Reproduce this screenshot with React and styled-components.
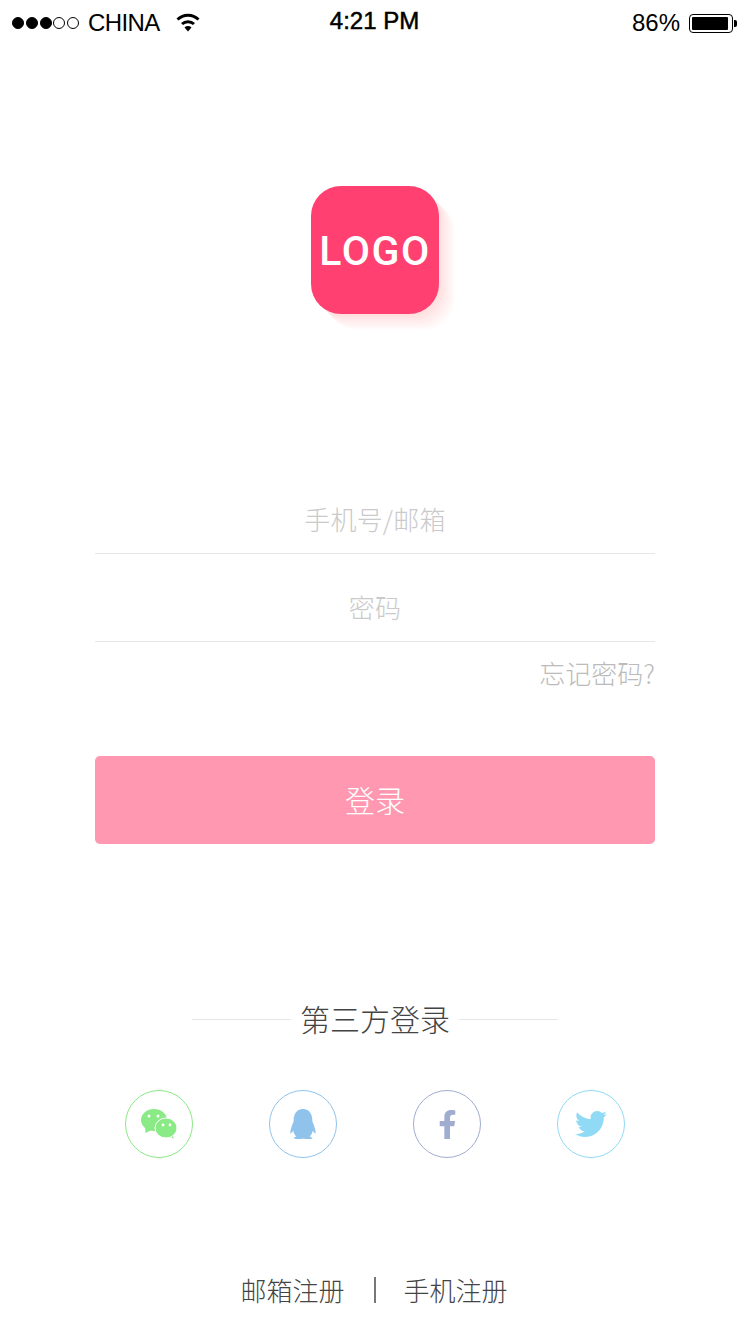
import React from 'react';
import styled, { createGlobalStyle } from 'styled-components';
import { FaFacebookF, FaQq, FaTwitter } from 'react-icons/fa';

const CJK = '"Noto Sans CJK SC", "Liberation Sans", sans-serif';

const GlobalStyle = createGlobalStyle`
  html, body { margin: 0; padding: 0; background: #fff; }
  * { box-sizing: border-box; }
`;

const longShadow = Array.from({ length: 16 }, (_, i) => {
  const d = i + 1;
  return `${d}px ${d}px 0 rgba(255, 64, 112, 0.012)`;
}).join(', ');

const Page = styled.div`
  width: 750px;
  height: 1334px;
  overflow: hidden;
  display: flex;
  flex-direction: column;
  align-items: center;
  font-family: ${CJK};
`;

const StatusBar = styled.div`
  width: 100%;
  height: 44px;
  padding: 2px 17px 0 12px;
  display: grid;
  grid-template-columns: 1fr auto 1fr;
  align-items: center;
  font-family: "Liberation Sans", sans-serif;
  font-size: 24px;
  color: #000;
`;

const StatusLeft = styled.div`
  display: flex;
  align-items: center;
`;

const StatusRight = styled.div`
  display: flex;
  align-items: center;
  justify-content: flex-end;
`;

const Signal = styled.div`
  display: flex;
  gap: 1.75px;
  margin-right: 9px;
`;

const Dot = styled.span`
  width: 12px;
  height: 12px;
  border-radius: 50%;
  border: 1px solid #000;
  background: ${(p) => (p.$on ? '#000' : 'transparent')};
`;

const Carrier = styled.span`
  letter-spacing: -0.6px;
`;

const Clock = styled.div`
  margin-top: -5px;
  padding-left: 4px;
  -webkit-text-stroke: 0.5px #000;
`;

const WifiGlyph = styled.svg`
  width: 24px;
  height: 20px;
  margin-left: 16px;
  margin-top: -3px;
`;

const Battery = styled.div`
  position: relative;
  width: 44px;
  height: 19px;
  margin-left: 9px;
  padding: 2px;
  border: 1px solid #000;
  border-radius: 4px;

  &::before {
    content: '';
    display: block;
    width: 36px;
    height: 100%;
    background: #000;
    border-radius: 1px;
  }

  &::after {
    content: '';
    position: absolute;
    right: -5px;
    top: 5px;
    width: 3px;
    height: 7px;
    background: #000;
    border-radius: 0 2px 2px 0;
  }
`;

const Logo = styled.div`
  margin-top: 142px;
  width: 128px;
  height: 128px;
  flex: none;
  border-radius: 30px;
  background: #ff4070;
  box-shadow: ${longShadow};
  display: flex;
  align-items: center;
  justify-content: center;
  color: #fff;
  font-family: Roboto, sans-serif;
  font-weight: 500;
  font-size: 41px;
  letter-spacing: 1.5px;
`;

const LogoText = styled.span`
  display: block;
  transform: translateY(1px);
`;

const Form = styled.form`
  width: 560px;
  margin-top: 162px;
  display: flex;
  flex-direction: column;
`;

const Field = styled.input`
  width: 100%;
  height: 88px;
  padding: 18px 0 0;
  border: 0;
  border-bottom: 1px solid #e6e6e6;
  outline: none;
  background: transparent;
  text-align: center;
  font-family: ${CJK};
  font-size: 26px;
  font-weight: 300;
  letter-spacing: 0.2px;
  color: #333;
  margin-top: ${(p) => (p.$first ? '-10px' : '0')};

  &::placeholder {
    color: #cacaca;
    opacity: 1;
  }
`;

const Forgot = styled.div`
  align-self: flex-end;
  margin-top: 12px;
  font-size: 26px;
  line-height: 38px;
  font-weight: 300;
  color: #bbb;
`;

const LoginButton = styled.button`
  width: 100%;
  height: 88px;
  margin-top: 64px;
  padding: 0 0 2px;
  border: 0;
  border-radius: 5px;
  background: #ff98b0;
  color: #fff;
  font-family: ${CJK};
  font-size: 30px;
  font-weight: 300;
`;

const Divider = styled.div`
  margin-top: 153px;
  width: 366px;
  height: 44px;
  display: flex;
  align-items: center;
  justify-content: space-between;
  font-size: 30px;
  font-weight: 300;
  color: #444;
`;

const Rule = styled.span`
  flex: 1;
  height: 1px;
  background: #e6e6e6;
`;

const DividerLabel = styled.span`
  margin: -2px 9px 0;
  white-space: nowrap;
`;

const SocialRow = styled.div`
  margin-top: 49px;
  display: flex;
  gap: 76px;
`;

const SocialButton = styled.div`
  width: 68px;
  height: 68px;
  border-radius: 50%;
  border: 1px solid ${(p) => p.$color};
  color: ${(p) => p.$color};
  display: flex;
  align-items: center;
  justify-content: center;
`;

const Links = styled.div`
  margin-top: 111px;
  padding-right: 2px;
  display: flex;
  align-items: center;
  font-size: 26px;
  line-height: 42px;
  font-weight: 300;
  color: #444;
`;

const LinkSep = styled.span`
  width: 2px;
  height: 26px;
  margin: 0 28px 0 29px;
  background: #777;
`;

function WifiIcon() {
  return (
    <WifiGlyph viewBox="0 0 24 20" fill="none" stroke="#000" strokeWidth="3">
      <path d="M1.5 7.5a15 15 0 0 1 21 0" />
      <path d="M6 12a9 9 0 0 1 12 0" />
      <path d="M8.5 15.5a5 5 0 0 1 7 0L12 19.5z" fill="#000" stroke="none" />
    </WifiGlyph>
  );
}

function WechatIcon() {
  return (
    <svg width="38" height="32" viewBox="0 0 38 32" fill="currentColor">
      <ellipse cx="14" cy="12" rx="13" ry="11" />
      <path d="M5 18l.5 7 6-3z" />
      <path d="M30 28l3.5 3-.5-6z" />
      <ellipse cx="26" cy="20" rx="11" ry="10" stroke="#fff" strokeWidth="1" />
      <circle cx="9" cy="8" r="1.5" fill="#fff" />
      <circle cx="18" cy="8" r="1.5" fill="#fff" />
      <circle cx="23" cy="17" r="1.4" fill="#fff" />
      <circle cx="30" cy="17" r="1.4" fill="#fff" />
    </svg>
  );
}

export default function App() {
  return (
    <Page>
      <GlobalStyle />
      <StatusBar>
        <StatusLeft>
          <Signal>
            <Dot $on />
            <Dot $on />
            <Dot $on />
            <Dot />
            <Dot />
          </Signal>
          <Carrier>CHINA</Carrier>
          <WifiIcon />
        </StatusLeft>
        <Clock>4:21 PM</Clock>
        <StatusRight>
          86%
          <Battery />
        </StatusRight>
      </StatusBar>

      <Logo>
        <LogoText>LOGO</LogoText>
      </Logo>

      <Form>
        <Field $first placeholder="手机号/邮箱" />
        <Field placeholder="密码" />
        <Forgot>忘记密码?</Forgot>
        <LoginButton type="button">登录</LoginButton>
      </Form>

      <Divider>
        <Rule />
        <DividerLabel>第三方登录</DividerLabel>
        <Rule />
      </Divider>

      <SocialRow>
        <SocialButton $color="#8aea85">
          <WechatIcon />
        </SocialButton>
        <SocialButton $color="#90c3ec">
          <FaQq size={30} />
        </SocialButton>
        <SocialButton $color="#a0acd0">
          <FaFacebookF size={29} />
        </SocialButton>
        <SocialButton $color="#90daf5">
          <FaTwitter size={32} />
        </SocialButton>
      </SocialRow>

      <Links>
        <span>邮箱注册</span>
        <LinkSep />
        <span>手机注册</span>
      </Links>
    </Page>
  );
}
